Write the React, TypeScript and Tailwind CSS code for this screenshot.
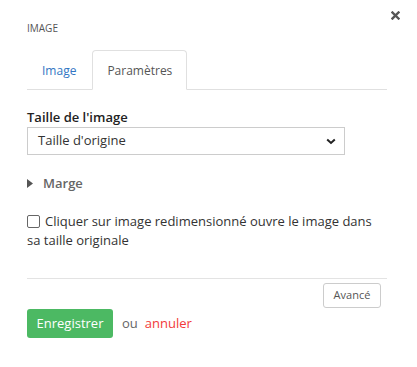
import React, { useState } from 'react';

const font = { fontFamily: '"Open Sans", "Noto Sans", sans-serif' };

export default function App() {
  const [tab, setTab] = useState(1);
  const [checked, setChecked] = useState(false);

  return (
    <div className="relative w-[417px] h-[367px] bg-white text-[#333]" style={font}>
      {/* close */}
      <button className="absolute top-[10px] right-[17px] w-[10px] h-[10px] flex items-center justify-center">
        <svg width="9" height="9" viewBox="0 0 9 9">
          <path d="M1.5 1.5 L7.5 7.5 M7.5 1.5 L1.5 7.5" stroke="#555" strokeWidth="2.4" strokeLinecap="square" />
        </svg>
      </button>

      <div className="pl-[27px] pr-[30px] pt-[21px]">
        <div className="text-[10px] leading-[14px] text-[#555] uppercase">Image</div>

        {/* tabs */}
        <div className="mt-[15px] flex border-b border-[#e0e0e0] h-[40px]">
          {['Image', 'Paramètres'].map((t, i) => (
            <div
              key={t}
              onClick={() => setTab(i)}
              className={
                tab === i
                  ? 'ml-[1px] -mb-px h-[40px] px-[14px] pt-[10px] text-[12px] leading-[20px] text-[#555] bg-white border border-[#e0e0e0] border-b-white rounded-t-[4px] cursor-pointer'
                  : 'h-[39px] px-[15px] pt-[11px] text-[12px] leading-[20px] text-[#3276c3] cursor-pointer'
              }
            >
              {t}
            </div>
          ))}
        </div>

        {/* taille */}
        <div className="mt-[18px] text-[13px] leading-[18px] font-semibold text-[#222]">Taille de l'image</div>
        <div className="mt-[1px] w-[318px] h-[28px] border border-[#ccc] flex items-center justify-between pl-[10px] pr-[8px] text-[13px] text-[#333]">
          <span>Taille d'origine</span>
          <svg width="10" height="7" viewBox="0 0 10 7">
            <path d="M1.2 1.5 L5 5 L8.8 1.5" fill="none" stroke="#222" strokeWidth="2" />
          </svg>
        </div>

        {/* marge */}
        <div className="mt-[19px] flex items-center gap-[10px] text-[13px] leading-[18px] font-semibold text-[#666]">
          <svg width="6" height="9" viewBox="0 0 6 9">
            <path d="M0 0 L6 4.5 L0 9 Z" fill="#555" />
          </svg>
          <span>Marge</span>
        </div>

        {/* checkbox */}
        <div className="mt-[20px] text-[13px] leading-[19px] text-[#333]">
          <label className="cursor-pointer">
            <span
              onClick={() => setChecked(!checked)}
              className="inline-block align-[-2px] w-[13px] h-[13px] border border-[#666] rounded-[2px] mr-[5px] bg-white"
            >
              {checked && (
                <svg width="11" height="11" viewBox="0 0 11 11">
                  <path d="M2 5.5 L4.5 8 L9 2.5" fill="none" stroke="#333" strokeWidth="1.6" />
                </svg>
              )}
            </span>
            Cliquer sur image redimensionné ouvre le image dans sa taille originale
          </label>
        </div>

        <div className="mt-[28px] border-t border-[#e3e3e3]" />

        <div className="flex justify-end pr-[6px] mt-[4px]">
          <button className="h-[25px] w-[58px] border border-[#ccc] rounded-[3px] text-[11px] text-[#555] bg-white">
            Avancé
          </button>
        </div>

        <div className="flex items-center mt-[1px]">
          <button className="h-[29px] w-[86px] bg-[#4cb963] rounded-[3px] text-white text-[13px]">
            Enregistrer
          </button>
          <span className="ml-[9px] text-[13px] text-[#666]">ou</span>
          <span className="ml-[7px] text-[13px] text-[#f23a3a] cursor-pointer">annuler</span>
        </div>
      </div>
    </div>
  );
}
